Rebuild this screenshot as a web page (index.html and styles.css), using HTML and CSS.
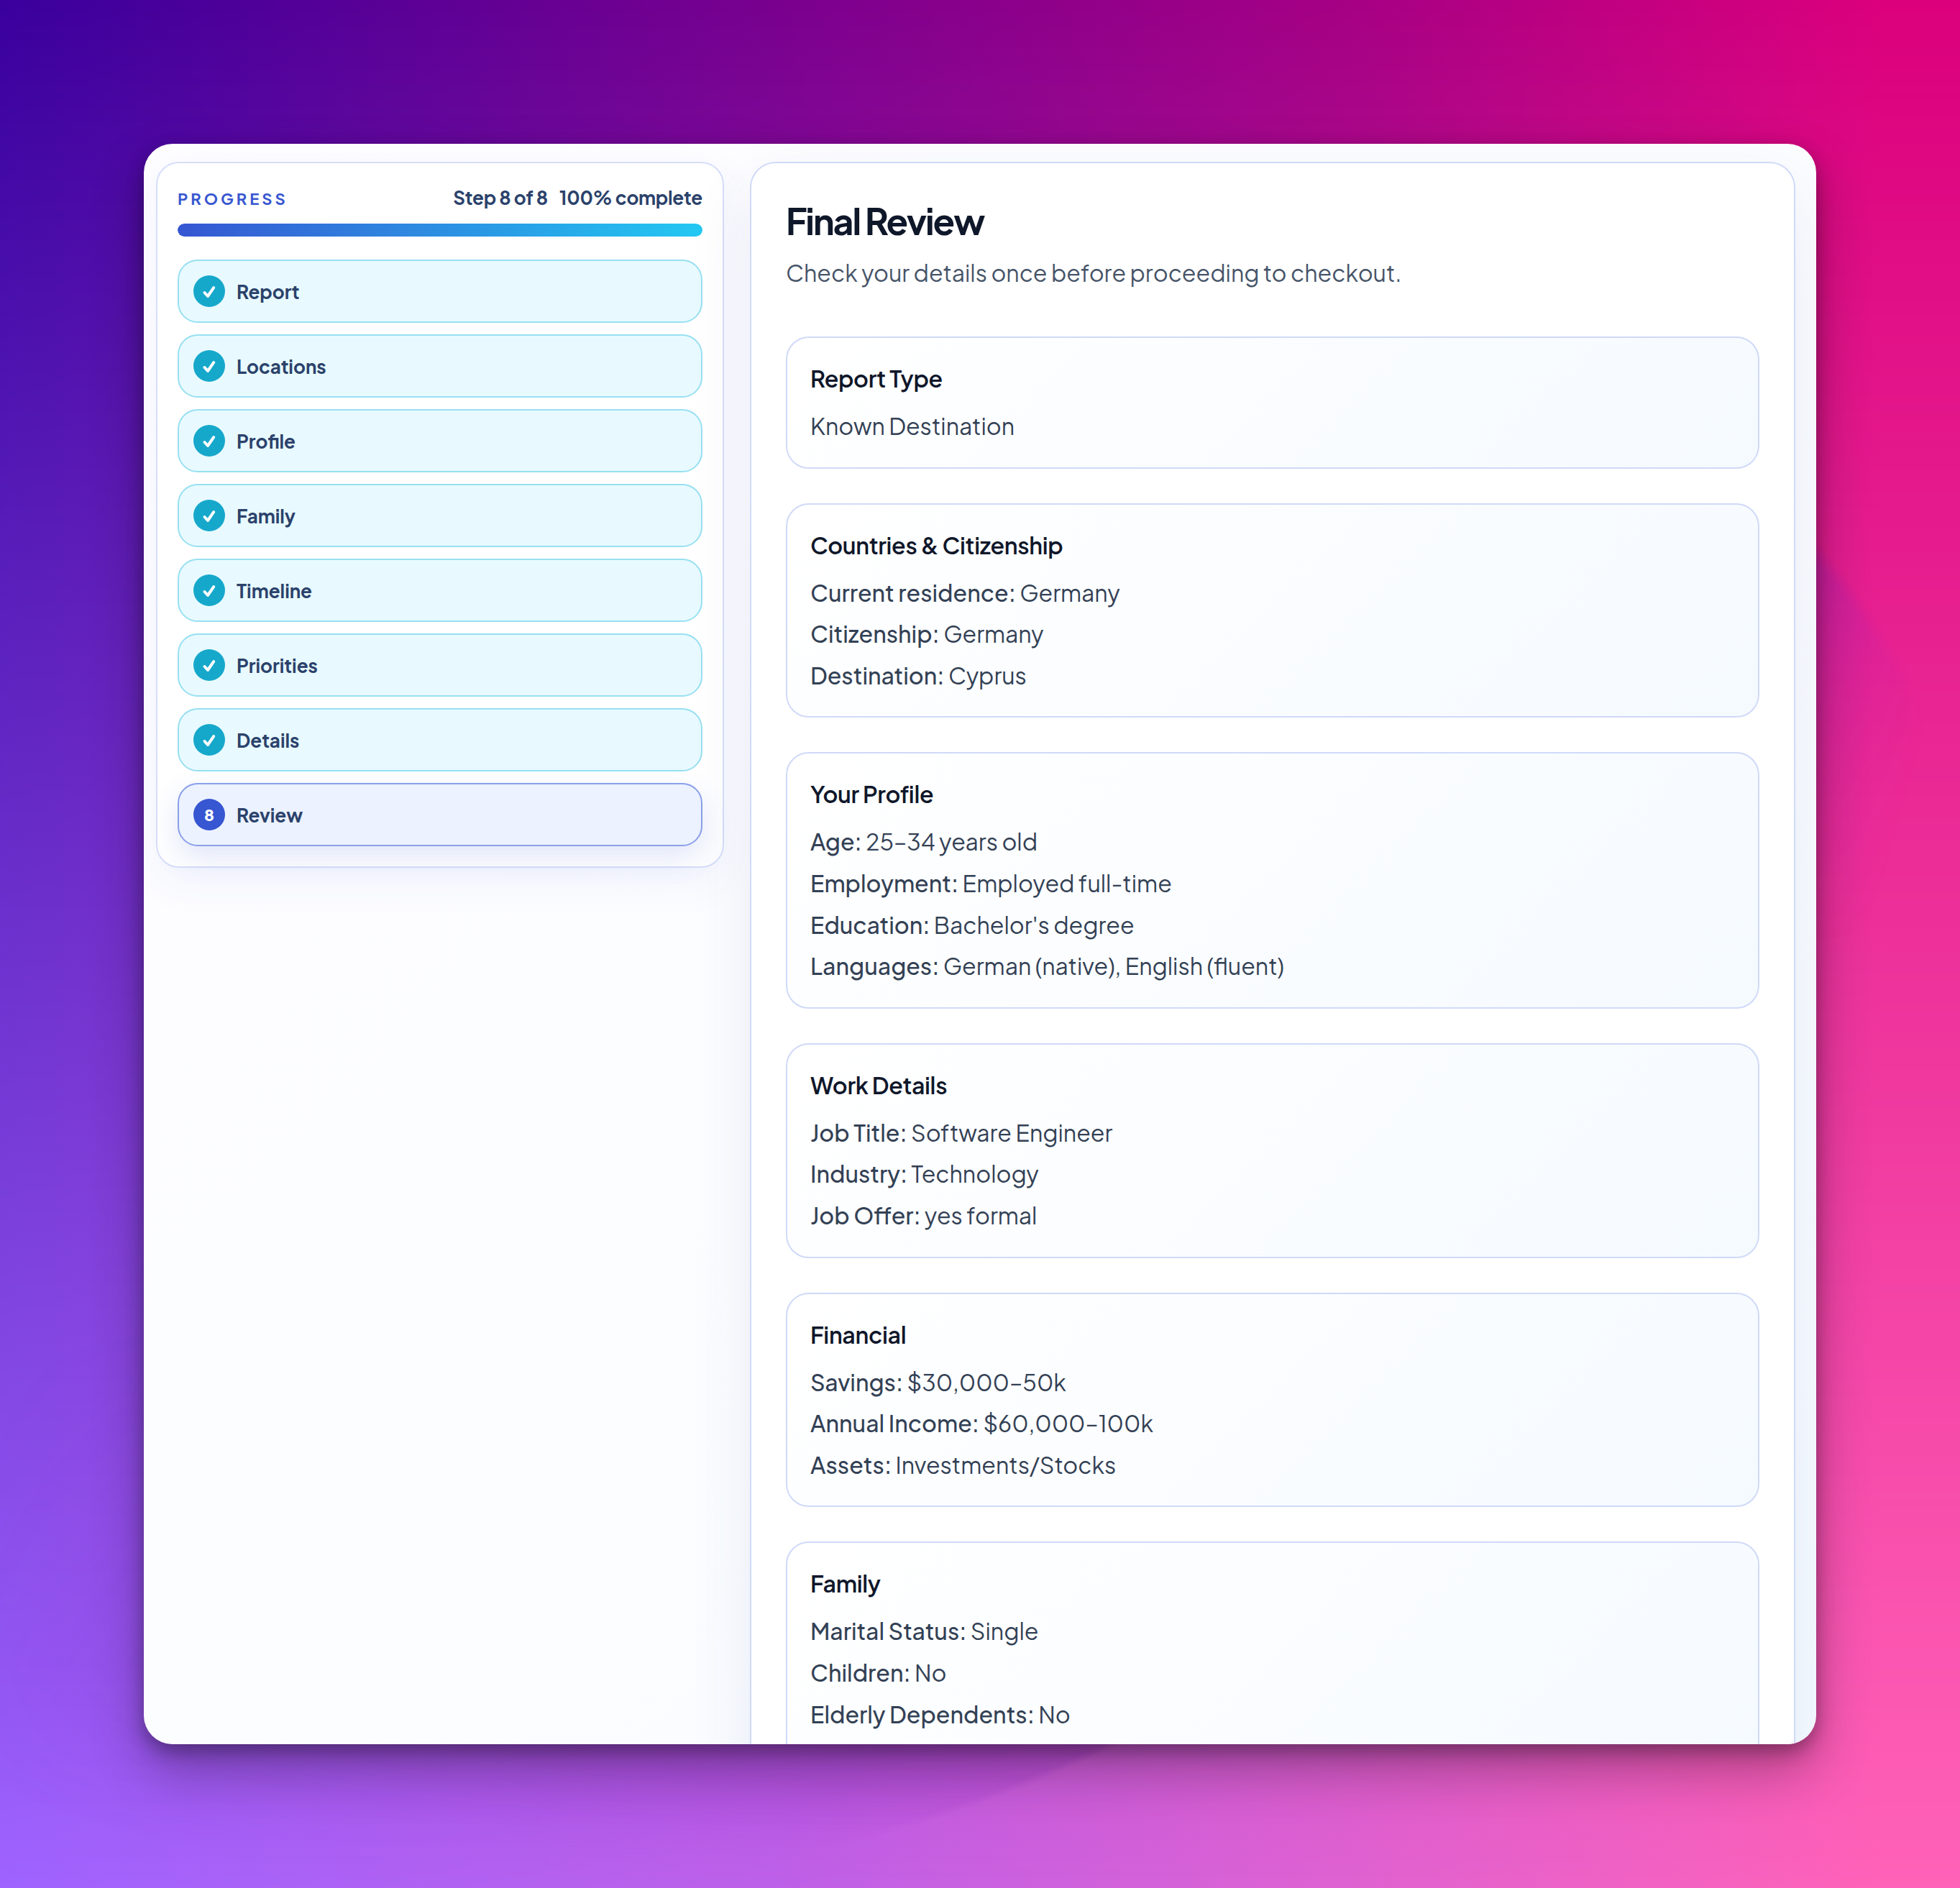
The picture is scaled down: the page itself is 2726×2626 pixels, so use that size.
FILE: index.html
```
<!DOCTYPE html>
<html lang="en">

<head>
  <meta charset="UTF-8">
  <meta name="viewport" content="width=device-width, initial-scale=1.0">
  <link rel="stylesheet" href="styles.css">
  <title>Final Review</title>
</head>

<body>

  <!-- shared check mark for finished steps -->
  <svg class="sprite" aria-hidden="true">
    <symbol id="check" viewBox="0 0 44 44">
      <path d="M15.5 24 L20 29 L28.2 17.2" fill="none" stroke="#fff" stroke-width="4" stroke-linecap="round" stroke-linejoin="round"/>
    </symbol>
  </svg>

  <div class="window">

    <!-- Progress -->
    <aside class="sidebar">
      <div class="progress-header">
        <span class="progress-title">PROGRESS</span>
        <span class="progress-status"><span>Step 8 of 8</span><span>100% complete</span></span>
      </div>
      <div class="progress-track" role="progressbar" aria-label="Progress" aria-valuenow="100" aria-valuemin="0" aria-valuemax="100">
        <div class="progress-fill" style="width: 100%"></div>
      </div>
      <nav class="steps">
        <button class="step done" type="button"><svg class="step-mark"><use href="#check"/></svg>Report</button>
        <button class="step done" type="button"><svg class="step-mark"><use href="#check"/></svg>Locations</button>
        <button class="step done" type="button"><svg class="step-mark"><use href="#check"/></svg>Profile</button>
        <button class="step done" type="button"><svg class="step-mark"><use href="#check"/></svg>Family</button>
        <button class="step done" type="button"><svg class="step-mark"><use href="#check"/></svg>Timeline</button>
        <button class="step done" type="button"><svg class="step-mark"><use href="#check"/></svg>Priorities</button>
        <button class="step done" type="button"><svg class="step-mark"><use href="#check"/></svg>Details</button>
        <button class="step current" type="button" aria-current="step"><span class="step-mark">8</span>Review</button>
      </nav>
    </aside>

    <!-- Review -->
    <main class="review">
      <h1>Final Review</h1>
      <p class="subtitle">Check your details once before proceeding to checkout.</p>

      <div class="cards">
        <section class="card">
          <h2>Report Type</h2>
          <p>Known Destination</p>
        </section>
        <section class="card">
          <h2>Countries &amp; Citizenship</h2>
          <p><strong>Current residence:</strong> Germany</p>
          <p><strong>Citizenship:</strong> Germany</p>
          <p><strong>Destination:</strong> Cyprus</p>
        </section>
        <section class="card">
          <h2>Your Profile</h2>
          <p><strong>Age:</strong> 25–34 years old</p>
          <p><strong>Employment:</strong> Employed full-time</p>
          <p><strong>Education:</strong> Bachelor's degree</p>
          <p><strong>Languages:</strong> German (native), English (fluent)</p>
        </section>
        <section class="card">
          <h2>Work Details</h2>
          <p><strong>Job Title:</strong> Software Engineer</p>
          <p><strong>Industry:</strong> Technology</p>
          <p><strong>Job Offer:</strong> yes formal</p>
        </section>
        <section class="card">
          <h2>Financial</h2>
          <p><strong>Savings:</strong> $30,000–50k</p>
          <p><strong>Annual Income:</strong> $60,000–100k</p>
          <p><strong>Assets:</strong> Investments/Stocks</p>
        </section>
        <section class="card">
          <h2>Family</h2>
          <p><strong>Marital Status:</strong> Single</p>
          <p><strong>Children:</strong> No</p>
          <p><strong>Elderly Dependents:</strong> No</p>
        </section>
      </div>
    </main>

  </div>

</body>

</html>
```
FILE: styles.css
```
* {
  box-sizing: border-box;
}

body {
  position: relative;
  height: 100vh;
  margin: 0;
  padding: 200px;
  overflow: hidden;
  font-family: "Plus Jakarta Sans", Inter, sans-serif;
  color: #334155;
  background: linear-gradient(90deg, #3a009e, #6f0091 33%, #a80084 70%, #dc007d 96%);
}

/* lighter colours fade in towards the bottom */
body::before {
  content: "";
  position: absolute;
  inset: 0;
  background: linear-gradient(90deg, #9f63ff, #be60e8 40%, #de62d2 68%, #ff62b8 96%);
  -webkit-mask-image: linear-gradient(transparent, #000);
  mask-image: linear-gradient(transparent, #000);
}

/* big soft circles behind the window */
body::after {
  content: "";
  position: absolute;
  inset: 0;
  background:
    radial-gradient(circle at 68% 52%, rgba(150, 35, 190, 0.55) 890px, transparent 910px),
    radial-gradient(circle at 26% -46%, rgba(120, 25, 190, 0.4) 1905px, transparent 1915px) bottom / 100% 50% no-repeat;
  -webkit-mask-image: linear-gradient(105deg, transparent 15%, #000 55%, #000 76%, transparent 86%), linear-gradient(transparent 20%, #000 28%, transparent 50%, transparent 70%, #000 88%, transparent 98%);
  -webkit-mask-composite: source-in;
  mask-composite: intersect;
}

.sprite {
  display: none;
}

.window {
  position: relative;
  z-index: 1;
  display: grid;
  grid-template-columns: minmax(0, 790px) minmax(0, 1fr);
  align-items: start;
  gap: 36px;
  height: 100%;
  padding: 25px 29px 0 17px;
  overflow: hidden;
  border-radius: 40px;
  background: linear-gradient(135deg, #fefdff, #fcfdff 50%, #f5fbff);
  box-shadow: 0 36px 72px rgba(0, 0, 0, 0.3), 0 10px 24px rgba(0, 0, 0, 0.3);
}

.sidebar {
  padding: 28px;
  border: 2px solid #d7defa;
  border-radius: 32px;
  background: rgba(255, 255, 255, 0.85);
  box-shadow: 0 20px 60px rgba(53, 88, 214, 0.06);
}

.progress-header {
  display: flex;
  justify-content: space-between;
  align-items: baseline;
  height: 40px;
  margin-bottom: 16px;
  line-height: 40px;
}

.progress-title {
  color: #3857d0;
  font-size: 22px;
  font-weight: 700;
  letter-spacing: 0.18em;
}

.progress-status {
  display: flex;
  gap: 16px;
  color: #2b426b;
  font-size: 26px;
  font-weight: 700;
  letter-spacing: -0.01em;
}

.progress-track {
  height: 18px;
  margin-bottom: 32px;
  overflow: hidden;
  border-radius: 9px;
  background: #e6ecfb;
}

.progress-fill {
  height: 100%;
  border-radius: 9px;
  background: linear-gradient(90deg, #3656d2, #22c8f2);
}

.steps {
  display: flex;
  flex-direction: column;
  gap: 16px;
}

.step {
  display: flex;
  align-items: center;
  gap: 16px;
  height: 88px;
  padding: 0 20px;
  border: 2px solid #98e0f2;
  border-radius: 28px;
  background: #e8faff;
  color: #2b426b;
  font: inherit;
  font-size: 26px;
  font-weight: 700;
  text-align: left;
  cursor: pointer;
}

.step-mark {
  flex: none;
  width: 44px;
  height: 44px;
  border-radius: 50%;
  background: #16a8cb;
  color: #fff;
  font-size: 22px;
  font-weight: 800;
  line-height: 44px;
  text-align: center;
}

.step.current {
  border-color: #8ba0ea;
  background: #ecf2ff;
  box-shadow: 0 16px 40px rgba(53, 88, 214, 0.15);
}

.step.current .step-mark {
  background: #3656d2;
}

.review {
  padding: 48px;
  border: 2px solid #d0daf8;
  border-radius: 36px;
  background: #fff;
  box-shadow: 0 36px 90px rgba(53, 70, 160, 0.09);
}

h1 {
  margin: 0 0 12px;
  color: #0f172a;
  font-size: 50px;
  font-weight: 700;
  line-height: 64px;
  letter-spacing: -0.04em;
}

.subtitle {
  margin: 0 0 60px;
  color: #475569;
  font-size: 32px;
  line-height: 57px;
}

.cards {
  display: flex;
  flex-direction: column;
  gap: 48px;
}

.card {
  padding: 24px 32px 28px;
  border: 2px solid #d0daf8;
  border-radius: 32px;
  background: linear-gradient(135deg, #fff, #f5faff);
}

.card:last-child {
  padding-bottom: 84px;
}

.card h2 {
  margin: 0 0 6px;
  color: #0f172a;
  font-size: 32px;
  font-weight: 600;
  line-height: 64px;
  letter-spacing: -0.01em;
}

.card p {
  margin: 0;
  font-size: 32px;
  line-height: 1.8;
}

.card strong {
  font-weight: 500;
}
```
